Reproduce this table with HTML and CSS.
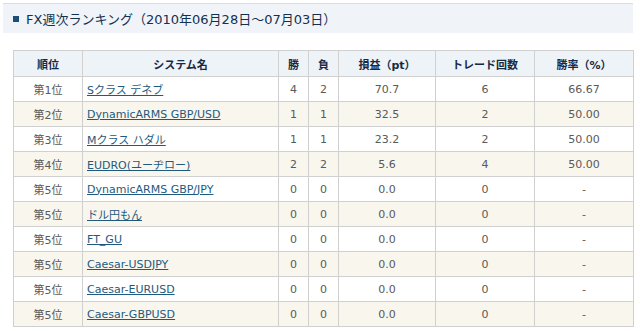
FILE: index.html
```html
<!DOCTYPE html>
<html lang="ja">
<head>
<meta charset="utf-8">
<title>FX週次ランキング</title>
<link rel="stylesheet" href="styles.css">
</head>
<body>
<div class="title"><span class="bullet"></span><h2 class="title-text">FX週次ランキング（2010年06月28日～07月03日）</h2></div>
<table class="rank">
<colgroup>
<col class="c-rank"><col class="c-name"><col class="c-win"><col class="c-lose"><col class="c-pl"><col class="c-trades"><col class="c-rate">
</colgroup>
<thead>
<tr><th>順位</th><th>システム名</th><th>勝</th><th>負</th><th>損益（pt）</th><th>トレード回数</th><th>勝率（%）</th></tr>
</thead>
<tbody>
<tr><td>第1位</td><td class="name"><a href="#">Sクラス デネブ</a></td><td>4</td><td>2</td><td>70.7</td><td>6</td><td>66.67</td></tr>
<tr><td>第2位</td><td class="name"><a href="#">DynamicARMS GBP/USD</a></td><td>1</td><td>1</td><td>32.5</td><td>2</td><td>50.00</td></tr>
<tr><td>第3位</td><td class="name"><a href="#">Mクラス ハダル</a></td><td>1</td><td>1</td><td>23.2</td><td>2</td><td>50.00</td></tr>
<tr><td>第4位</td><td class="name"><a href="#">EUDRO(ユーヂロー)</a></td><td>2</td><td>2</td><td>5.6</td><td>4</td><td>50.00</td></tr>
<tr><td>第5位</td><td class="name"><a href="#">DynamicARMS GBP/JPY</a></td><td>0</td><td>0</td><td>0.0</td><td>0</td><td>-</td></tr>
<tr><td>第5位</td><td class="name"><a href="#">ドル円もん</a></td><td>0</td><td>0</td><td>0.0</td><td>0</td><td>-</td></tr>
<tr><td>第5位</td><td class="name"><a href="#">FT_GU</a></td><td>0</td><td>0</td><td>0.0</td><td>0</td><td>-</td></tr>
<tr><td>第5位</td><td class="name"><a href="#">Caesar-USDJPY</a></td><td>0</td><td>0</td><td>0.0</td><td>0</td><td>-</td></tr>
<tr><td>第5位</td><td class="name"><a href="#">Caesar-EURUSD</a></td><td>0</td><td>0</td><td>0.0</td><td>0</td><td>-</td></tr>
<tr><td>第5位</td><td class="name"><a href="#">Caesar-GBPUSD</a></td><td>0</td><td>0</td><td>0.0</td><td>0</td><td>-</td></tr>
</tbody>
</table>
</body>
</html>
```
FILE: styles.css
```css
html, body {
  margin: 0;
  padding: 0;
  background: #ffffff;
  overflow: hidden;
}
body {
  font-family: "DejaVu Sans", "Noto Sans CJK JP", sans-serif;
  color: #5a5a5a;
}
.title {
  display: flex;
  align-items: center;
  margin: 3px 7px 0 3px;
  height: 30px;
  border-top: 1px solid #d9dde2;
  background: #f0f4f8;
  padding-left: 10px;
  box-sizing: border-box;
}
.bullet {
  width: 6px;
  height: 6px;
  background: #1d4d7a;
  margin-right: 7px;
  flex: none;
}
.title-text {
  margin: 0;
  font-size: 13px;
  font-weight: normal;
  color: #14304f;
}
.rank {
  margin: 17px 0 0 13px;
  width: 620px;
  border-collapse: collapse;
  table-layout: fixed;
  font-size: 11px;
}
.c-rank { width: 69px; }
.c-name { width: 196px; }
.c-win { width: 30px; }
.c-lose { width: 30px; }
.c-pl { width: 97px; }
.c-trades { width: 99px; }
.c-rate { width: 99px; }
.rank th, .rank td {
  border: 1px solid #d0d0d0;
  text-align: center;
  padding: 0;
  height: 24px;
}
.rank th {
  background: #eef3f8;
  color: #172a45;
  font-weight: bold;
  height: 25px;
}
.rank tbody tr:nth-child(even) td {
  background: #f9f6ee;
}
.rank td.name {
  text-align: left;
  padding-left: 4px;
}
.rank a {
  color: #1f5a7e;
  text-decoration: underline;
}
```
